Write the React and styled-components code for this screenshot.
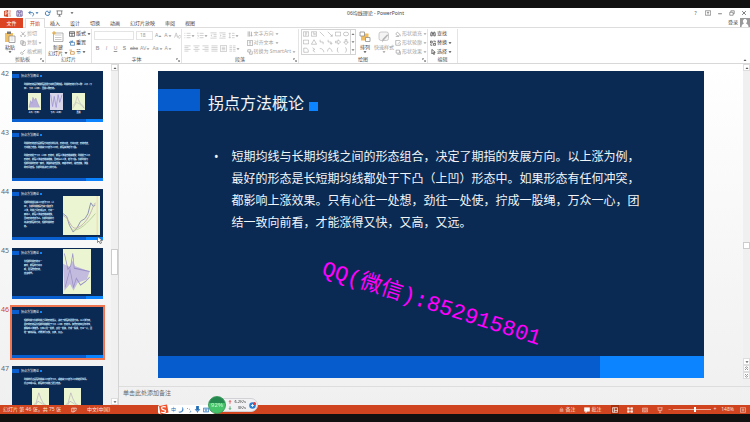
import React, { useState } from 'react';
import styled, { createGlobalStyle } from 'styled-components';

const GlobalStyle = createGlobalStyle`
  * {
    box-sizing: border-box;
  }
  body {
    margin: 0;
    background: #111;
    color: #555;
    font-family: "Noto Sans", "Noto Sans CJK SC", sans-serif;
    font-size: 5px;
    line-height: 7px;
  }
  button, input, select {
    appearance: none;
    background: none;
    border: 0;
    border-radius: 0;
    color: inherit;
    font: inherit;
    margin: 0;
    outline: 0;
    padding: 0;
  }
  svg {
    display: block;
    flex: none;
  }
`;

const Screen = styled.div`
  background: #fff;
  border: solid #111;
  border-width: 8px 0;
  display: flex;
  flex-direction: column;
  height: 100vh;
  overflow: hidden;
`;

/* ---------- title bar and tabs ---------- */

const TitleBar = styled.header`
  align-items: center;
  display: grid;
  flex: none;
  grid-template-columns: 1fr auto 1fr;
  height: 10px;
  padding: 0 3px 0 4px;
`;

const QuickAccess = styled.div`
  align-items: center;
  display: flex;
  gap: 5px;
`;

const WindowButtons = styled(QuickAccess)`
  justify-content: flex-end;
`;

const IconButton = styled.button`
  align-items: center;
  color: ${(props) => props.$color || 'inherit'};
  display: flex;
  justify-content: center;
  min-width: 7px;
`;

const WindowTitle = styled.h1`
  color: #444;
  font-size: 5px;
  font-weight: 400;
  margin: 0;
`;

const TabRow = styled.nav`
  align-items: stretch;
  border-bottom: 1px solid #ddd;
  display: flex;
  flex: none;
  height: 10px;
`;

const FileTab = styled.button`
  background: #dc4322;
  color: #fff;
  margin: 0 2px -1px 0;
  width: 23px;
`;

const Tab = styled.button`
  background: #fff;
  border: solid ${(props) => (props.$active ? '#ddd' : 'transparent')};
  border-width: 1px 1px 0;
  color: ${(props) => (props.$active ? '#d24726' : '#444')};
  margin-bottom: ${(props) => (props.$active ? '-1px' : '0')};
  padding: 0 4px;
`;

const Account = styled.div`
  align-items: center;
  color: #444;
  display: flex;
  gap: 2px;
  margin-left: auto;
`;

/* ---------- ribbon ---------- */

const RibbonBar = styled.div`
  border-bottom: 1px solid #d8d8d8;
  display: flex;
  flex: none;
  height: 36px;
`;

const GroupBox = styled.section`
  border-right: 1px solid #e4e4e4;
  display: flex;
  flex: none;
  flex-direction: column;
  margin-top: 1px;
  width: ${(props) => props.$width}px;
`;

const GroupBody = styled.div`
  display: flex;
  flex: 1;
  gap: ${(props) => props.$gap || 2}px;
  min-height: 0;
  padding: 0 2px;
`;

const GroupFooter = styled.footer`
  align-items: center;
  display: grid;
  flex: none;
  grid-template-columns: 5px 1fr 5px;
  height: 7px;
  text-align: center;
`;

const Stack = styled.div`
  display: grid;
  grid-auto-rows: 9px;
  justify-items: start;
`;

const BigButton = styled.button`
  align-items: center;
  color: ${(props) => (props.$dim ? '#999' : '#444')};
  display: flex;
  flex: none;
  flex-direction: column;
  line-height: 6px;
  padding-top: 2px;
  white-space: nowrap;
  width: ${(props) => props.$width || 16}px;
  svg:first-child {
    margin-bottom: 1px;
  }
`;

const SmallButton = styled.button`
  align-items: center;
  color: ${(props) => (props.$dim ? '#a4a4a4' : '#444')};
  display: flex;
  gap: 1px;
  white-space: nowrap;
`;

const ToolColumn = styled.div`
  color: #999;
  display: flex;
  flex: 1;
  flex-direction: column;
  gap: 4px;
  padding: 2px 0;
`;

const ToolRow = styled.div`
  align-items: center;
  display: flex;
  gap: 2px;
  height: 9px;
`;

const FontSelect = styled.select`
  border: 1px solid #e4e4e4;
  color: #999;
  height: 9px;
  line-height: 7px;
  padding-left: 3px;
  width: ${(props) => props.$width}px;
`;

const TextTool = styled.button`
  align-items: center;
  display: flex;
  flex: none;
  font-family: "Liberation Sans", sans-serif;
  font-style: ${(props) => (props.$italic ? 'italic' : 'normal')};
  font-weight: ${(props) => (props.$bold ? 700 : 400)};
  justify-content: center;
  min-width: 7px;
  text-decoration: ${(props) => props.$line || 'none'};
`;

const Gallery = styled.div`
  border: 1px solid #d4d4d4;
  color: #777;
  display: grid;
  flex: none;
  grid-template-columns: repeat(6, 8px) 5px;
  grid-template-rows: repeat(3, 8px);
  height: 26px;
  button {
    align-items: center;
    display: flex;
    justify-content: center;
  }
  button:nth-child(7n) {
    border-left: 1px solid #d4d4d4;
  }
`;

const Collapse = styled(IconButton)`
  align-self: flex-end;
  margin: 0 2px 1px auto;
`;

/* ---------- work area ---------- */

const Work = styled.main`
  background: linear-gradient(#fff, #f0f0f0);
  display: flex;
  flex: 1;
  min-height: 0;
`;

const ThumbPane = styled.aside`
  border-right: 1px solid #d4d4d4;
  display: flex;
  flex: none;
  width: 119px;
`;

const ThumbList = styled.ol`
  display: flex;
  flex: 1;
  flex-direction: column;
  gap: 8px;
  list-style: none;
  margin: 0;
  overflow: hidden;
  padding: 7px 0 0 1px;
`;

const ThumbItem = styled.li`
  color: ${(props) => (props.$active ? '#d24726' : '#666')};
  display: flex;
  flex: none;
  font-size: 7px;
  gap: 2px;
  line-height: 5px;
`;

const ThumbNumber = styled.span`
  width: 9px;
`;

const ThumbFrame = styled.button`
  box-shadow: ${(props) => (props.$active ? '0 0 0 2px #ef7550' : 'none')};
  display: block;
  height: 51px;
  text-align: left;
  width: 91px;
`;

const MiniSlide = styled.span`
  background: #0a2a54;
  color: #fff;
  display: flex;
  flex-direction: column;
  font-size: 2px;
  font-weight: 700;
  height: 100%;
  line-height: 4px;
`;

const MiniTop = styled.span`
  display: flex;
  flex: 1;
  min-height: 0;
`;

const MiniColumn = styled.span`
  display: flex;
  flex: 1;
  flex-direction: column;
`;

const MiniHead = styled.span`
  align-items: center;
  display: flex;
  font-size: 3px;
  font-weight: 400;
  gap: 2px;
  height: 4px;
  margin-top: 3px;
  &::before {
    background: #0a5fd0;
    content: '';
    height: 4px;
    width: 7px;
  }
  &::after {
    background: #0c84ff;
    content: '';
    height: 2px;
    margin-left: -1px;
    width: 2px;
  }
`;

const MiniText = styled.span`
  display: block;
  padding: 5px 4px 0 12px;
  white-space: nowrap;
  & + & {
    padding-top: 4px;
  }
`;

const MiniPictures = styled.span`
  display: flex;
  gap: ${(props) => props.$gap}px;
  padding: 2px 0 0 ${(props) => props.$left}px;
`;

const MiniFigure = styled.span`
  align-items: center;
  display: flex;
  flex-direction: column;
  gap: 1px;
`;

const SidePicture = styled.span`
  flex: none;
  padding: ${(props) => props.$pad};
`;

const MiniFoot = styled.span`
  background: linear-gradient(90deg, #0a5fd0 81%, #0c84ff 81%);
  flex: none;
  height: 3px;
`;

const Rail = styled.div`
  background: #f0f0f0;
  display: flex;
  flex: none;
  flex-direction: column;
  padding-bottom: ${(props) => props.$bottom || 0}px;
  width: 7px;
`;

const RailButton = styled.button`
  align-items: center;
  background: #fff;
  border: 1px solid #ddd;
  display: flex;
  height: 7px;
  justify-content: center;
`;

const RailHandle = styled.div`
  background: #fff;
  border: 1px solid #ccc;
  height: ${(props) => props.$height}px;
`;

const Space = styled.div`
  flex: ${(props) => props.$grow || 1};
`;

const Editor = styled.div`
  display: flex;
  flex: 1;
  flex-direction: column;
  min-width: 0;
`;

const StageRow = styled.div`
  display: flex;
  flex: 1;
  min-height: 0;
`;

const Stage = styled.div`
  flex: 1;
  min-width: 0;
  padding: 7px 39px 0;
`;

const Slide = styled.article`
  aspect-ratio: 546 / 307;
  background: #0a2a54;
  color: #f2f5f8;
  display: flex;
  flex-direction: column;
  position: relative;
`;

const SlideHead = styled.div`
  align-items: flex-end;
  display: flex;
  margin-top: 18px;
  &::before {
    background: #065ccd;
    content: '';
    height: 22px;
    width: 42px;
  }
  &::after {
    background: #0c84ff;
    content: '';
    height: 9px;
    margin-left: 5px;
    width: 9px;
  }
`;

const SlideTitle = styled.h2`
  font-size: 16px;
  font-weight: 400;
  line-height: 15px;
  margin: 0 0 0 8px;
`;

const SlideList = styled.ul`
  flex: 1;
  font-size: 12px;
  line-height: 22px;
  list-style: none;
  margin: 0;
  padding: 35px 0 0 56px;
  li {
    display: flex;
    gap: 13px;
    white-space: nowrap;
  }
  li::before {
    content: '•';
  }
`;

const SlideFoot = styled.div`
  background: linear-gradient(90deg, #065ccd 81%, #0c84ff 81%);
  height: 22px;
`;

const Watermark = styled.p`
  color: #f0f;
  font-family: "Liberation Mono", "Noto Sans CJK SC", monospace;
  font-size: 22px;
  left: 50%;
  line-height: 26px;
  margin: 0;
  position: absolute;
  top: 72%;
  transform: translate(-50%, 0) rotate(18deg);
  white-space: nowrap;
`;

const Notes = styled.input`
  border-top: 1px solid #ddd;
  flex: none;
  font-size: 6px;
  height: 19px;
  padding: 0 4px 6px;
  &::placeholder {
    color: #666;
    opacity: 1;
  }
`;

/* ---------- status bar ---------- */

const StatusBar = styled.footer`
  align-items: center;
  background: #d04420;
  color: #fbe3da;
  display: flex;
  flex: none;
  gap: 9px;
  height: 9px;
  padding: 0 3px;
`;

const StatusButton = styled.button`
  align-items: center;
  background: ${(props) => (props.$active ? '#a8320f' : 'transparent')};
  display: flex;
  gap: 1px;
  height: 9px;
  justify-content: center;
  min-width: 8px;
`;

const ViewTools = styled.div`
  align-items: center;
  display: flex;
  gap: 5px;
`;

const Views = styled.div`
  display: flex;
  gap: 7px;
`;

const ZoomBox = styled.div`
  align-items: center;
  display: flex;
  gap: 2px;
`;

const ZoomRange = styled.input`
  height: 7px;
  width: 38px;
  &::-webkit-slider-runnable-track {
    background: linear-gradient(#f0b5a3, #f0b5a3) center / 100% 1px no-repeat;
    height: 5px;
  }
  &::-webkit-slider-thumb {
    appearance: none;
    background: #fff;
    height: 5px;
    width: 2px;
  }
`;

/* ---------- floating tools ---------- */

const Floating = styled.div`
  align-items: flex-end;
  bottom: 8px;
  display: flex;
  left: 158px;
  position: fixed;
`;

const ImeBar = styled.div`
  align-items: center;
  background: #fff;
  border-radius: 2px;
  color: #1f6cb8;
  display: flex;
  gap: 2px;
  height: 9px;
  padding-right: 6px;
`;

const Ball = styled.div`
  background: linear-gradient(#25884f 36%, #45c469 36%);
  border: 1px solid #3a9a5c;
  border-radius: 50%;
  color: #c8f5d2;
  font-size: 6px;
  height: 18px;
  line-height: 16px;
  margin: 0 -14px 0 -7px;
  text-align: center;
  width: 18px;
  z-index: 1;
`;

const SpeedPill = styled.div`
  align-items: center;
  background: #f1f1f3;
  border: 1px solid #d2d2d6;
  border-radius: 7px;
  color: #333;
  display: grid;
  font-size: 4px;
  gap: 0 3px;
  grid-template-columns: 3px 12px 7px;
  grid-template-rows: 6px 6px;
  line-height: 6px;
  margin-bottom: 2px;
  padding: 0 1px 0 15px;
  text-align: right;
  svg:last-child {
    grid-column: 3;
    grid-row: 1 / 3;
  }
`;

const Cursor = styled.svg`
  left: 97px;
  position: fixed;
  top: 236px;
`;

/* ---------- drawings ---------- */

function Glyph({ d, size = 7, color = 'currentColor', fill = 'none', width = 2, children }) {
  return (
    <svg width={size} height={size} viewBox="0 0 16 16" fill={fill} stroke={color} strokeWidth={width}>
      {d && <path d={d} />}
      {children}
    </svg>
  );
}

const Caret = ({ up }) => (
  <svg width="4" height="4" viewBox="0 0 4 4" fill="currentColor">
    <path d={up ? 'M0.5 3h3L2 1.2z' : 'M0.5 1.2h3L2 3z'} />
  </svg>
);

const Launcher = () => <Glyph size={4} d="M2 8V2h6M6 6l8 8M14 8v6H8" />;

const paths = {
  cut: 'M3 2l8 9M13 2l-8 9M4 11a2 2 0 1 0 1 3M12 11a2 2 0 1 1-1 3',
  copy: 'M2 2h7v9H2zM6 5h8v10H6z',
  brush: 'M14 2L8 8M4 8l5 4-4 3-4-4z',
  layout: 'M1 2h14v12H1zM1 6h14M8 6v8',
  reset: 'M4 6h11v8H4zM1 8c0-5 5-6 8-3M9 1v4H5',
  section: 'M1 3h7M4 7h10v7H4z',
  bullets: 'M1 3h2M1 8h2M1 13h2M6 3h9M6 8h9M6 13h9',
  numbers: 'M2 1v4M1 8h2v3M1 14h2M6 3h9M6 8h9M6 13h9',
  outdent: 'M1 2h14M8 6h7M8 10h7M1 14h14M5 6L2 8l3 2',
  indent: 'M1 2h14M8 6h7M8 10h7M1 14h14M2 6l3 2-3 2',
  spacing: 'M4 2v12M2 4l2-2 2 2M2 12l2 2 2-2M9 3h6M9 8h6M9 13h6',
  left: 'M1 2h14M1 6h9M1 10h14M1 14h9',
  center: 'M1 2h14M4 6h8M1 10h14M4 14h8',
  right: 'M1 2h14M6 6h9M1 10h14M6 14h9',
  justify: 'M1 2h14M1 6h14M1 10h14M1 14h14',
  spread: 'M1 1h14v14H1zM4 5h8M4 8h8M4 11h8',
  columns: 'M1 2h6M1 6h6M1 10h6M1 14h6M9 2h6M9 6h6M9 10h6M9 14h6',
  direction: 'M3 1v14M7 1v14M12 2v11M10 11l2 3 2-3',
  align: 'M1 1h14v14H1zM5 5h6M5 8h6M8 11v3',
  smart: 'M2 2h8v6H2zM7 8v6h7V6',
  fill: 'M6 3l7 6-5 5-6-6zM14 10v4M2 15h9',
  outline: 'M14 1H2v13h12V8M15 3l-7 7',
  effects: 'M3 3h9v8H3zM6 14h9V6',
  find: 'M3 3h3v10H2V8zM10 3h3l1 5v5h-4zM6 7h4',
  replace: 'M1 3h5v5H1zM9 9h6v5H9zM9 3h5v3M2 11v3h4',
  select: 'M5 1v12l3-3 2 5 2-1-2-5h4z',
};

const galleryShapes = [
  'M1 2h14v12H1zM5 5h6M5 8h6M5 11h4',
  'M1 2h14v12H1zM5 5h3v6M11 5v6',
  'M2 2l12 12',
  'M2 2l12 12M14 9v5H9',
  'M1 3h14v10H1z',
  'M1 8a7 5 0 1 0 14 0a7 5 0 1 0-14 0',
  'M1 3h14v10H1z',
  'M8 2l7 12H1z',
  'M3 2v6h8v6',
  'M3 2v6h8v6M8 11l3 3 3-3',
  'M1 6h7V2l7 6-7 6v-4H1z',
  'M6 1h4v7h4l-6 7-6-7h4z',
  'M2 3h8l4 5v6H2z',
  'M4 2l6 4-5 3 6 5',
  'M2 4c7 0 10 4 11 10',
  'M1 12C4 0 9 0 14 13',
  'M9 1C4 3 9 7 5 8c4 1 0 5 4 7',
  'M6 1c5 2 0 6 4 7-4 1 0 5-4 7',
];

const PowerPointLogo = () => (
  <svg width="7" height="7" viewBox="0 0 16 16">
    <path d="M7 2h9v12H7z" fill="#fff" stroke="#d24726" />
    <path d="M10 5h4M10 8h4M10 11h4" stroke="#d24726" />
    <path d="M0 2l9-2v16l-9-2z" fill="#d24726" />
    <path d="M3 12V4h2a2 2 0 0 1 0 5H3" fill="none" stroke="#fff" strokeWidth="1.6" />
  </svg>
);

const PasteIcon = () => (
  <svg width="12" height="12" viewBox="0 0 24 24">
    <path d="M2 4h16v18H2z" fill="#f0c067" />
    <path d="M6 1h8v5H6z" fill="#777" />
    <path d="M10 10h12v13H10z" fill="#fff" stroke="#888" strokeWidth="1.5" />
    <path d="M13 14h6M13 18h6" stroke="#aaa" />
  </svg>
);

const NewSlideIcon = () => (
  <svg width="12" height="12" viewBox="0 0 24 24">
    <path d="M3 4h19v17H3z" fill="#fff" stroke="#999" strokeWidth="1.5" />
    <path d="M6 8h13M6 13h13M6 17h13" stroke="#bbb" strokeWidth="1.5" />
    <path d="M4 0v8M0 4h8" stroke="#e5a93c" strokeWidth="2" />
  </svg>
);

const ArrangeIcon = () => (
  <svg width="12" height="12" viewBox="0 0 24 24">
    <path d="M4 5h15v14H4z" fill="#f1bd5f" />
    <path d="M2 2h9v8H2zM13 13h9v8h-9z" fill="#fff" stroke="#888" strokeWidth="1.5" />
  </svg>
);

const StyleIcon = () => (
  <svg width="12" height="12" viewBox="0 0 24 24">
    <rect x="2" y="2" width="19" height="17" rx="4" fill="#f4f4f4" stroke="#bbb" strokeWidth="1.5" />
    <path d="M21 8l-9 10-4 5 1-7 9-9z" fill="#b5b5b5" />
  </svg>
);

function Chart({ width, height, kind }) {
  return (
    <svg width={width} height={height} viewBox="0 0 40 40" preserveAspectRatio="none" fill="none">
      <path d="M0 0h40v40H0z" fill={kind === 'wave' ? '#d9d6ea' : '#ebf5d2'} />
      {kind === 'peak' && (
        <path d="M3 34l5-16 4 6 3-14 5 7 4-5 6 12 6 10" fill="#b9b0dc" stroke="#8a7fc0" />
      )}
      {kind === 'wave' && <path d="M2 4l6 28 5-24 6 26 6-30 5 18 7-18" stroke="#9a8fd0" strokeWidth="2" />}
      {kind === 'line' && <path d="M2 30l8-6 6-16 5 10 6 8 5 2 6 8M2 36l12-14 10 4 14 10" stroke="#a59ab0" />}
      {kind === 'valley' && (
        <>
          <path d="M0 18l4 3 3 9 4 7 4-4 4-7 5-3 3-5 3-11 3 4 2-2" stroke="#8a8eb0" />
          <path d="M0 20c7 2 8 14 14 13s12-8 15-14 4-10 6-12" stroke="#c4b3b0" />
          <path d="M10 35c8 1 16-7 25-17" stroke="#b8cc9a" />
          <path d="M37 0v40" stroke="#f3d5a8" />
        </>
      )}
      {kind === 'fan' && (
        <>
          <path d="M0 13l10 3 3-6 4 5 21 5-4 7-13 3-6 7-5-6-8 6z" fill="#c3bcdf" />
          <path d="M2 4l5 14 4-3 3-11 2 13 22 3M3 34l7-16 5 16 4-8 6 6 7-3 6-4" stroke="#9a90c6" />
        </>
      )}
    </svg>
  );
}

/* ---------- slide contents ---------- */

const TITLE = '拐点方法概论';

const bodyLines = [
  '短期均线与长期均线之间的形态组合，决定了期指的发展方向。以上涨为例，',
  '最好的形态是长短期均线都处于下凸（上凹）形态中。如果形态有任何冲突，',
  '都影响上涨效果。只有心往一处想，劲往一处使，拧成一股绳，万众一心，团',
  '结一致向前看，才能涨得又快，又高，又远。',
];

const slides = [
  {
    number: 42,
    text: [['均线的形态是判断期指发展方向的重要依据。均线的形态分为三种：上凸（下', '凹）、下凸（上凹）、直线三种形态。']],
    row: { left: 16, gap: 9, height: 17, items: [[13, 'peak', '上凸（下凹）'], [13, 'wave', '下凸（上凹）'], [13, 'line', '直线']] },
  },
  {
    number: 43,
    text: [
      ['均线的形态变化是期指方向变化的先兆，形态不变，方向不变；形态改变，', '方向随之改变。均线由下凸变为上凸时，期指由涨转为下跌。'],
      ['均线形态处于下凸（上凹）形态时，期指上涨速度越来越快；均线处于上凸', '形态时，期指上涨速度越来越慢，直到停止上涨，转为下跌。长期均线与', '短期均线的形态一致时，涨跌的速度最快，两者冲突时，速度变慢，涨跌', '的时间变短。长期均线决定大的方向。'],
    ],
  },
  {
    number: 44,
    text: [['短期均线首先由上凸变为下凸（上', '凹），长期均线随后也由下跌变为', '上涨，均线之间形成金叉，方向一', '致向上，期指上涨速度越来越快，', '直到形态改变为止。长期均线的方', '向决定期指的方向，短期均线的形', '态。']],
    side: { pad: '7px 3px 0 0', width: 37, height: 39, kind: 'valley' },
  },
  {
    number: 45,
    text: [['长短期均线形态不一', '致时，期指的方向不', '明，震荡整理形态，', '应该观望。']],
    side: { pad: '1px 12px 0 0', width: 28, height: 45, kind: 'fan' },
  },
  { number: 46, text: [bodyLines] },
  {
    number: 47,
    text: [['均线的拐点是指均线由上凸变为下凸，或者由下凸变为上凸的转折位置。', '拐点出现以后，期指的方向随之发生改变。']],
    row: { left: 20, gap: 15, height: 24, items: [[17, 'line'], [17, 'line']] },
  },
];

function Thumb({ slide, active, onSelect }) {
  const { number, text, row, side } = slide;
  return (
    <ThumbItem $active={active}>
      <ThumbNumber>{number}</ThumbNumber>
      <ThumbFrame $active={active} aria-label={`幻灯片 ${number}`} onClick={() => onSelect(number)}>
        <MiniSlide>
          <MiniTop>
            <MiniColumn>
              <MiniHead>{TITLE}</MiniHead>
              {text.map((lines) => (
                <MiniText key={lines[0]}>
                  {lines.map((line) => (
                    <React.Fragment key={line}>
                      {line}
                      <br />
                    </React.Fragment>
                  ))}
                </MiniText>
              ))}
              {row && (
                <MiniPictures $left={row.left} $gap={row.gap}>
                  {row.items.map(([width, kind, caption], i) => (
                    <MiniFigure key={i}>
                      <Chart width={width} height={row.height} kind={kind} />
                      {caption}
                    </MiniFigure>
                  ))}
                </MiniPictures>
              )}
            </MiniColumn>
            {side && (
              <SidePicture $pad={side.pad}>
                <Chart width={side.width} height={side.height} kind={side.kind} />
              </SidePicture>
            )}
          </MiniTop>
          <MiniFoot />
        </MiniSlide>
      </ThumbFrame>
    </ThumbItem>
  );
}

function Group({ title, width, gap, launcher, children }) {
  return (
    <GroupBox $width={width}>
      <GroupBody $gap={gap}>{children}</GroupBody>
      <GroupFooter>
        <span />
        {title}
        {launcher && <Launcher />}
      </GroupFooter>
    </GroupBox>
  );
}

function Small({ icon, label, color, dim, menu }) {
  return (
    <SmallButton $dim={dim}>
      <Glyph size={6} d={paths[icon]} color={color} />
      {label}
      {menu && <Caret />}
    </SmallButton>
  );
}

function Tool({ icon, menu }) {
  return (
    <IconButton aria-label={icon}>
      <Glyph d={paths[icon]} width={1} />
      {menu && <Caret />}
    </IconButton>
  );
}

function Ribbon() {
  return (
    <RibbonBar>
      <Group title="剪贴板" width={46} launcher>
        <BigButton>
          <PasteIcon />
          粘贴
          <Caret />
        </BigButton>
        <Stack>
          <Small icon="cut" label="剪切" dim />
          <Small icon="copy" label="复制" dim menu />
          <Small icon="brush" label="格式刷" dim />
        </Stack>
      </Group>
      <Group title="幻灯片" width={46} gap={1}>
        <BigButton $width={20}>
          <NewSlideIcon />
          新建
          <SmallButton as="span">
            幻灯片
            <Caret />
          </SmallButton>
        </BigButton>
        <Stack>
          <Small icon="layout" label="版式" menu />
          <Small icon="reset" label="重置" color="#3b78b5" />
          <Small icon="section" label="节" color="#c98a3c" menu />
        </Stack>
      </Group>
      <Group title="字体" width={90} launcher>
        <ToolColumn>
          <ToolRow>
            <FontSelect $width={40} aria-label="字体" defaultValue="">
              <option value="" />
            </FontSelect>
            <FontSelect $width={17} aria-label="字号" defaultValue="18">
              <option>18</option>
            </FontSelect>
            <TextTool aria-label="增大字号">
              A<Caret up />
            </TextTool>
            <TextTool aria-label="减小字号">
              A<Caret />
            </TextTool>
            <TextTool aria-label="清除格式">
              <Glyph d="M1 13L5 2l4 11M3 9h4M9 12l4-5 3 3-4 5z" width={1} />
            </TextTool>
          </ToolRow>
          <ToolRow>
            <TextTool $bold>B</TextTool>
            <TextTool $italic>I</TextTool>
            <TextTool $line="underline">U</TextTool>
            <TextTool $bold>S</TextTool>
            <TextTool $line="line-through">abc</TextTool>
            <TextTool>
              AV
              <Caret />
            </TextTool>
            <TextTool>
              Aa
              <Caret />
            </TextTool>
            <TextTool>
              A<Caret />
            </TextTool>
          </ToolRow>
        </ToolColumn>
      </Group>
      <Group title="段落" width={117} launcher>
        <ToolColumn>
          <ToolRow>
            <Tool icon="bullets" menu />
            <Tool icon="numbers" menu />
            <Tool icon="outdent" />
            <Tool icon="indent" />
            <Tool icon="spacing" menu />
          </ToolRow>
          <ToolRow>
            <Tool icon="left" />
            <Tool icon="center" />
            <Tool icon="right" />
            <Tool icon="justify" />
            <Tool icon="spread" />
            <Tool icon="columns" menu />
          </ToolRow>
        </ToolColumn>
        <Stack>
          <Small icon="direction" label="文字方向" dim menu />
          <Small icon="align" label="对齐文本" dim menu />
          <Small icon="smart" label="转换为 SmartArt" dim menu />
        </Stack>
      </Group>
      <Group title="绘图" width={129} gap={1} launcher>
        <Gallery>
          {[0, 1, 2].map((line) => (
            <React.Fragment key={line}>
              {galleryShapes.slice(line * 6, line * 6 + 6).map((d, i) => (
                <button key={i} aria-label={`形状 ${line * 6 + i + 1}`}>
                  <Glyph size={6} d={d} width={1} />
                </button>
              ))}
              <button aria-label={`滚动 ${line + 1}`}>
                <Caret up={line === 0} />
              </button>
            </React.Fragment>
          ))}
        </Gallery>
        <BigButton>
          <ArrangeIcon />
          排列
          <Caret />
        </BigButton>
        <BigButton $width={20} $dim>
          <StyleIcon />
          快速样式
          <Caret />
        </BigButton>
        <Stack>
          <Small icon="fill" label="形状填充" dim menu />
          <Small icon="outline" label="形状轮廓" dim menu />
          <Small icon="effects" label="形状效果" dim menu />
        </Stack>
      </Group>
      <Group title="编辑" width={30}>
        <Stack>
          <Small icon="find" label="查找" />
          <Small icon="replace" label="替换" menu />
          <Small icon="select" label="选择" menu />
        </Stack>
      </Group>
      <Collapse aria-label="折叠功能区">
        <Caret up />
      </Collapse>
    </RibbonBar>
  );
}

const tabs = ['开始', '插入', '设计', '切换', '动画', '幻灯片放映', '审阅', '视图'];

export default function App() {
  const [tab, setTab] = useState('开始');
  const [current, setCurrent] = useState(46);
  const [zoom, setZoom] = useState(58);

  return (
    <Screen>
      <GlobalStyle />
      <TitleBar>
        <QuickAccess>
          <PowerPointLogo />
          <IconButton aria-label="保存" $color="#6b5a9a">
            <Glyph d="M2 2h12v12H2zM5 2v4h6V2M5 14V9h6v5" />
          </IconButton>
          <IconButton aria-label="撤消" $color="#2f6da8">
            <Glyph d="M6 2L2 6l4 4M2 6h7c5 0 5 6 1 8" />
            <Caret />
          </IconButton>
          <IconButton aria-label="重复" $color="#2f6da8">
            <Glyph d="M13 8a5 5 0 1 1-3-5M9 6h5V1" />
          </IconButton>
          <IconButton aria-label="从头开始">
            <Glyph d="M1 2h14M3 2v8h10V2M8 10v4M5 14h6" width={1.5} />
          </IconButton>
          <IconButton aria-label="自定义">
            <Caret />
          </IconButton>
        </QuickAccess>
        <WindowTitle>06均线理论 - PowerPoint</WindowTitle>
        <WindowButtons>
          <IconButton>?</IconButton>
          <IconButton aria-label="功能区显示选项">
            <Glyph size={6} d="M1 2h14v12H1zM8 12V6M5 8l3-3 3 3" width={1.5} />
          </IconButton>
          <IconButton aria-label="最小化">
            <Glyph size={6} d="M3 10h10" />
          </IconButton>
          <IconButton aria-label="还原">
            <Glyph size={6} d="M2 6h9v8H2zM5 6V2h9v8h-3" width={1.5} />
          </IconButton>
          <IconButton aria-label="关闭">
            <Glyph size={6} d="M3 3l10 10M13 3L3 13" />
          </IconButton>
        </WindowButtons>
      </TitleBar>
      <TabRow>
        <FileTab>文件</FileTab>
        {tabs.map((name) => (
          <Tab key={name} $active={name === tab} onClick={() => setTab(name)}>
            {name}
          </Tab>
        ))}
        <Account>
          登录
          <svg width="10" height="9" viewBox="0 0 20 18">
            <path d="M0 0h20v18H0z" fill="#999" />
            <path d="M3 18c0-5 3-6 5-7-4-4-2-9 2-9s6 5 2 9c2 1 5 2 5 7z" fill="#fff" />
          </svg>
        </Account>
      </TabRow>
      <Ribbon />

      <Work>
        <ThumbPane>
          <ThumbList>
            {slides.map((slide) => (
              <Thumb key={slide.number} slide={slide} active={slide.number === current} onSelect={setCurrent} />
            ))}
          </ThumbList>
          <Rail>
            <RailButton aria-label="向上">
              <Caret up />
            </RailButton>
            <Space $grow={58} />
            <RailHandle $height={26} />
            <Space $grow={40} />
            <RailButton aria-label="向下">
              <Caret />
            </RailButton>
          </Rail>
        </ThumbPane>

        <Editor>
          <StageRow>
            <Stage>
              <Slide>
                <SlideHead>
                  <SlideTitle>{TITLE}</SlideTitle>
                </SlideHead>
                <SlideList>
                  <li>
                    <span>
                      {bodyLines.map((line) => (
                        <React.Fragment key={line}>
                          {line}
                          <br />
                        </React.Fragment>
                      ))}
                    </span>
                  </li>
                </SlideList>
                <SlideFoot />
                <Watermark>QQ(微信):852915801</Watermark>
              </Slide>
            </Stage>
            <Rail $bottom={7}>
              <RailButton aria-label="上移">
                <Caret up />
              </RailButton>
              <Space $grow={61} />
              <RailHandle $height={7} />
              <Space $grow={39} />
              <RailButton aria-label="下移">
                <Caret />
              </RailButton>
              <RailButton aria-label="上一张幻灯片">
                <Glyph size={5} d="M3 7l5-5 5 5M3 13l5-5 5 5" />
              </RailButton>
              <RailButton aria-label="下一张幻灯片">
                <Glyph size={5} d="M3 3l5 5 5-5M3 9l5 5 5-5" />
              </RailButton>
            </Rail>
          </StageRow>
          <Notes aria-label="备注" placeholder="单击此处添加备注" />
        </Editor>
      </Work>

      <StatusBar>
        <span>幻灯片 第 {current} 张，共 75 张</span>
        <StatusButton aria-label="拼写检查">
          <Glyph size={6} d="M8 3H2v10h6M8 3v10M8 3h6v4M9 13l5-5" />
        </StatusButton>
        <StatusButton>中文(中国)</StatusButton>
        <Space />
        <StatusButton>
          <Glyph size={5} d="M8 2L3 8h10zM2 11h12M2 14h12" width={1.5} />
          备注
        </StatusButton>
        <StatusButton>
          <Glyph size={6} d="M1 2h14v9H8l-3 4v-4H1z" fill="#fff" />
          批注
        </StatusButton>
        <ViewTools>
          <Views>
            <StatusButton $active aria-label="普通视图">
              <Glyph size={6} d="M1 2h14v12H1zM6 2v12M6 9h9" color="#fff" />
            </StatusButton>
            <StatusButton aria-label="幻灯片浏览">
              <Glyph size={6} d="M1 2h5v4H1zM10 2h5v4h-5zM1 10h5v4H1zM10 10h5v4h-5z" fill="#fff" />
            </StatusButton>
            <StatusButton aria-label="阅读视图">
              <Glyph size={6} d="M1 3h14v10H1zM8 3v10M3 6h3M3 9h3M10 6h3M10 9h3" width={1.5} />
            </StatusButton>
            <StatusButton aria-label="幻灯片放映">
              <Glyph size={6} d="M1 2h14M3 2v7h10V2M8 9v5M5 14h6" width={1.5} />
            </StatusButton>
          </Views>
          <ZoomBox>
            <button aria-label="缩小">−</button>
            <ZoomRange
              type="range"
              aria-label="缩放"
              value={zoom}
              onChange={(e) => setZoom(Number(e.target.value))}
            />
            <button aria-label="放大">+</button>
          </ZoomBox>
          <StatusButton>148%</StatusButton>
          <StatusButton aria-label="适应窗口">
            <Glyph size={6} d="M1 2h14v12H1zM8 4v8M4 8h8" width={1.5} />
          </StatusButton>
        </ViewTools>
      </StatusBar>

      <Floating>
        <ImeBar>
          <svg width="11" height="11" viewBox="0 0 22 22">
            <path d="M2 4l16-3 3 16-16 4z" fill="#f0512a" />
            <path d="M16 6C9 4 5 7 8 10s8 1 7 5-7 2-9 1" fill="none" stroke="#fff" strokeWidth="2.4" />
          </svg>
          <span>中</span>
          <Glyph size={6} d="M12 1c2 9-4 13-10 12 6 4 16-2 10-12z" fill="currentColor" width={1} />
          <Glyph size={6} d="M4 3v2M12 10c1 2 0 4-2 5M8 6h2" />
          <Glyph size={7} d="M8 1v8M3 7c0 6 10 6 10 0M8 12v3">
            <rect x="6" y="1" width="4" height="8" fill="currentColor" />
          </Glyph>
          <Glyph size={6} d="M1 3h14v10H1zM4 6h8M5 10h6" />
        </ImeBar>
        <Ball>92%</Ball>
        <SpeedPill>
          <Glyph size={4} d="M8 15V3M4 7l4-5 4 5" color="#d83a3a" width={3} />
          <span>6.2K/s</span>
          <Glyph size={4} d="M8 1v12M4 9l4 5 4-5" color="#2f9a50" width={3} />
          <span>3K/s</span>
          <svg width="7" height="7" viewBox="0 0 14 14">
            <circle cx="7" cy="7" r="6.5" fill="#2f7fd0" />
            <path d="M4 7h6M7 4v6" stroke="#fff" strokeWidth="1.6" />
            <circle cx="11" cy="3" r="3" fill="#e23c3c" />
          </svg>
        </SpeedPill>
      </Floating>
      <Cursor width="6" height="8" viewBox="0 0 12 16">
        <path d="M1 1v12l3-3 2 5 3-1-2-5h4z" fill="#fff" stroke="#222" />
      </Cursor>
    </Screen>
  );
}
